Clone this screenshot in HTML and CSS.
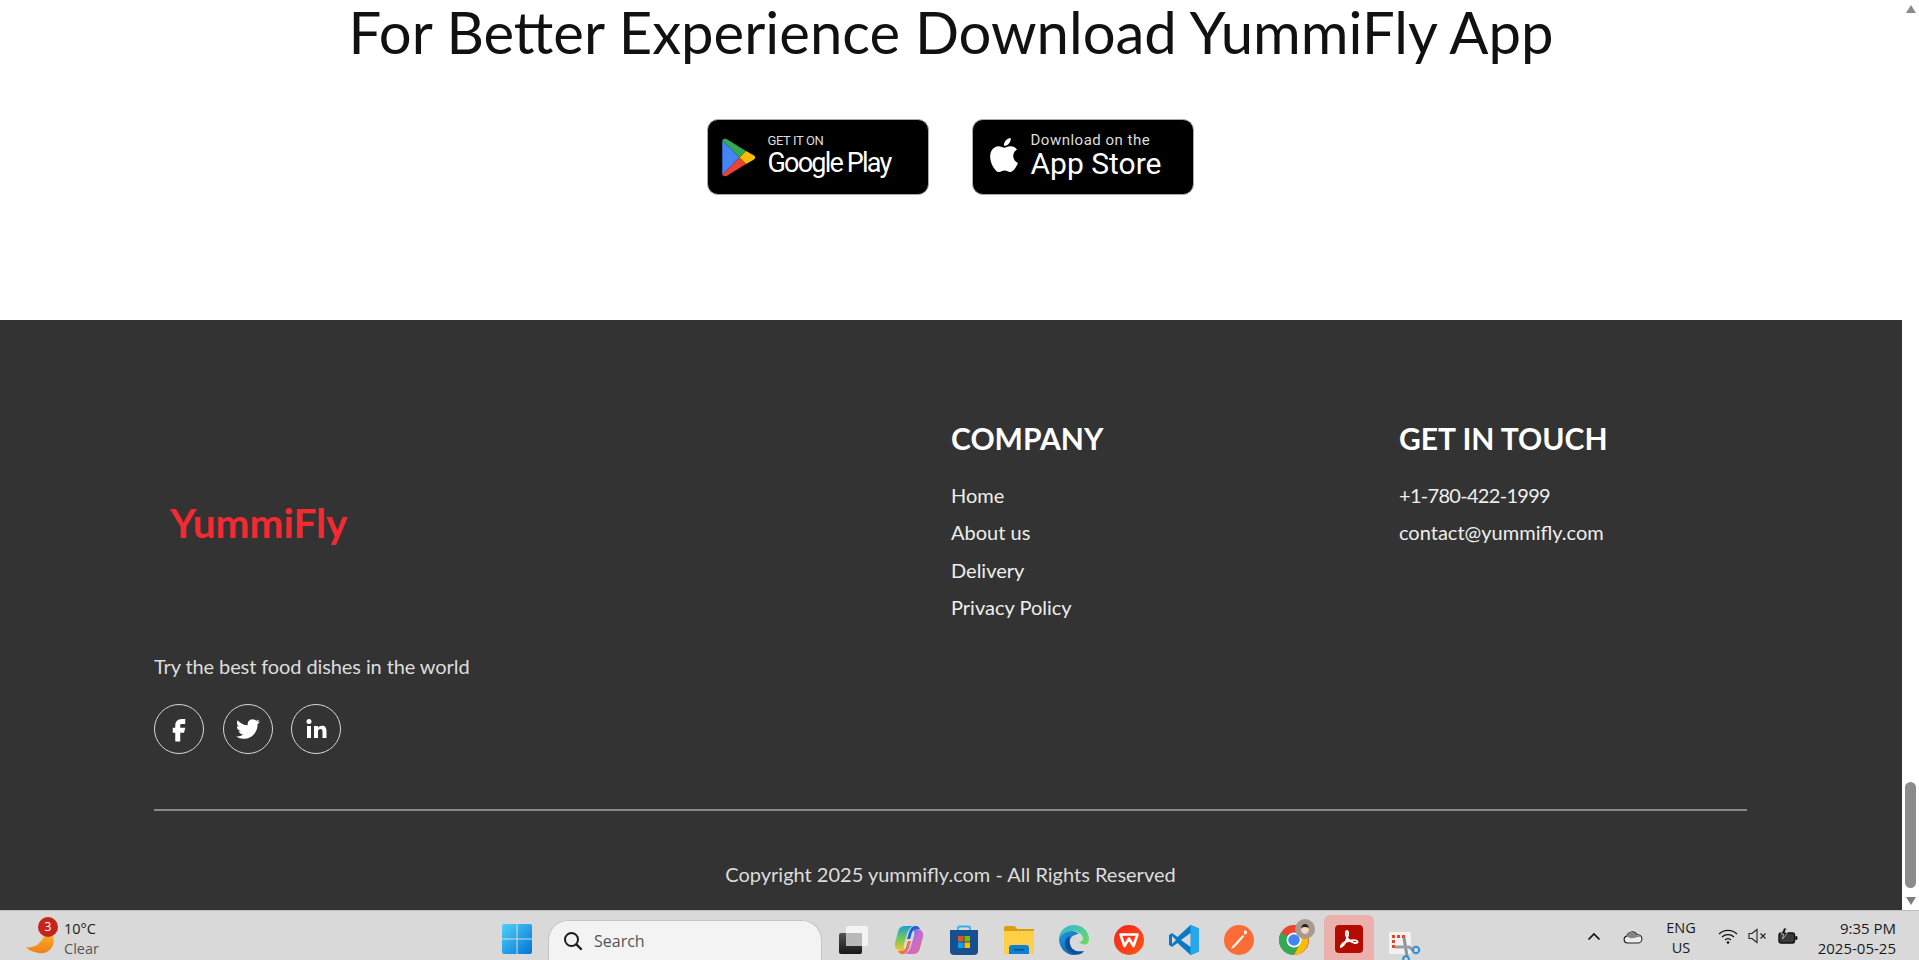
FILE: index.html
```html
<!DOCTYPE html>
<html lang="en">
<head>
<meta charset="utf-8">
<title>YummiFly</title>
<link rel="stylesheet" href="styles.css">
</head>
<body>
<div class="screen">
  <div class="view">
    <main class="page">
      <section class="download">
        <h1 class="download-title">For Better Experience Download YummiFly App</h1>
        <div class="stores">
          <a class="store">
            <svg class="store-icon gp" viewBox="0 0 32 36"><path d="M1 2 17 18 1 34Z" fill="#4285f4"/><path d="M1 2C2 .5 4 .5 5 1L23 12 17 18Z" fill="#34a853"/><path d="M1 34C2 35.500 4 35.500 5 35L23 24 17 18Z" fill="#ea4335"/><path d="M23 12 30 16C32 17 32 19 30 20L23 24 17 18Z" fill="#fbbc04"/></svg>
            <span class="store-text"><small class="gp-small">GET IT ON</small><b class="gp-big">Google Play</b></span>
          </a>
          <a class="store">
            <svg class="store-icon ap" viewBox="0 0 24 24"><path fill="#fff" d="M12.152 6.896c-.948 0-2.415-1.078-3.960-1.040-2.040.027-3.910 1.183-4.961 3.014-2.117 3.675-.546 9.103 1.519 12.090 1.013 1.454 2.208 3.090 3.792 3.039 1.520-.065 2.090-.987 3.935-.987 1.831 0 2.350.987 3.960.948 1.637-.026 2.676-1.480 3.676-2.948 1.156-1.688 1.636-3.325 1.662-3.415-.039-.013-3.182-1.221-3.220-4.857-.026-3.040 2.480-4.494 2.597-4.559-1.429-2.090-3.623-2.324-4.390-2.376-2-.156-3.675 1.090-4.610 1.090zM15.530 3.830c.843-1.012 1.400-2.427 1.245-3.830-1.207.052-2.662.805-3.532 1.818-.780.896-1.454 2.338-1.273 3.714 1.338.104 2.715-.688 3.559-1.701"/></svg>
            <span class="store-text"><small class="ap-small">Download on the</small><b class="ap-big">App Store</b></span>
          </a>
        </div>
      </section>
      <footer class="footer">
        <div class="footer-grid">
          <div class="brand">
            <div class="logo">YummiFly</div>
            <p class="tagline">Try the best food dishes in the world</p>
            <div class="socials">
              <a class="social social-fb"><svg viewBox="0 0 24 24"><path fill="#fff" d="M14 8h3V4h-3c-2.800 0-5 2.200-5 5v2H7v4h2v7h4v-7h3l1-4h-4V9c0-.6.4-1 1-1z"/></svg></a>
              <a class="social"><svg viewBox="0 0 24 24"><path fill="#fff" d="M23.953 4.570a10 10 0 01-2.825.775 4.958 4.958 0 002.163-2.723c-.951.555-2.005.959-3.127 1.184a4.920 4.920 0 00-8.384 4.482C7.690 8.095 4.067 6.130 1.640 3.162a4.822 4.822 0 00-.666 2.475c0 1.710.870 3.213 2.188 4.096a4.904 4.904 0 01-2.228-.616v.060a4.923 4.923 0 003.946 4.827 4.996 4.996 0 01-2.212.085 4.936 4.936 0 004.604 3.417 9.867 9.867 0 01-6.102 2.105c-.390 0-.779-.023-1.170-.067a13.995 13.995 0 007.557 2.209c9.053 0 13.998-7.496 13.998-13.985 0-.210 0-.420-.015-.630A9.935 9.935 0 0024 4.590z"/></svg></a>
              <a class="social"><svg viewBox="0 0 24 24"><g fill="#fff"><circle cx="5" cy="4.500" r="2.500"/><rect x="3" y="9" width="4" height="12"/><path d="M10 9h4v1.800C14.800 9.500 16.200 8.700 18 8.700c3.200 0 4.500 2 4.500 5.300v7h-4v-6.300c0-1.700-.6-2.700-2.100-2.700-1.500 0-2.400 1-2.400 2.700V21h-4z"/></g></svg></a>
            </div>
          </div>
          <nav class="col">
            <h2 class="col-title">COMPANY</h2>
            <a class="col-link">Home</a>
            <a class="col-link">About us</a>
            <a class="col-link">Delivery</a>
            <a class="col-link">Privacy Policy</a>
          </nav>
          <div class="col">
            <h2 class="col-title">GET IN TOUCH</h2>
            <a class="col-link col-phone">+1-780-422-1999</a>
            <a class="col-link">contact@yummifly.com</a>
          </div>
        </div>
        <hr class="rule">
        <p class="copyright">Copyright 2025 yummifly.com - All Rights Reserved</p>
      </footer>
    </main>
    <aside class="scrollbar">
      <span class="arrow arrow-up"></span>
      <span class="thumb"></span>
      <span class="arrow arrow-down"></span>
    </aside>
  </div>
  <div class="taskbar">
    <div class="weather">
      <span class="weather-icon">
        <svg viewBox="0 0 30 24"><defs><linearGradient id="moon" x1="0" y1="0" x2="0" y2="1"><stop offset="0" stop-color="#fbb62a"/><stop offset="1" stop-color="#ef7f1a"/></linearGradient></defs><path d="M1 17C9 19 18 13 21 1c7 2 9 8 7 14-2 6-8 9-14 8-6-1-11-3-13-6z" fill="url(#moon)"/></svg>
        <span class="weather-badge">3</span>
      </span>
      <span class="weather-text"><span>10°C</span><span class="weather-sub">Clear</span></span>
    </div>
    <div class="apps">
      <svg class="app-win" viewBox="0 0 30 30"><defs><linearGradient id="win" x1="0" y1="0" x2="1" y2="1"><stop offset="0" stop-color="#4fd0fb"/><stop offset="1" stop-color="#0274d4"/></linearGradient></defs><path fill="url(#win)" d="M0 2a2 2 0 0 1 2-2h12.500v14.500H0ZM15.500 0H28a2 2 0 0 1 2 2v12.500H15.500ZM0 15.500h14.500V30H2a2 2 0 0 1-2-2ZM15.500 15.500H30V28a2 2 0 0 1-2 2H15.500Z"/></svg>
      <div class="search">
        <svg class="search-icon" viewBox="0 0 20 20"><circle cx="8.500" cy="8.500" r="6.500" fill="none" stroke="#1c1c1c" stroke-width="2"/><path d="M13.500 13.500 18 18" stroke="#1c1c1c" stroke-width="2.400" stroke-linecap="round"/></svg>
        <span>Search</span>
      </div>
      <svg class="app" viewBox="0 0 30 30"><defs><linearGradient id="tv1" x1="0" y1="0" x2="0" y2="1"><stop offset="0" stop-color="#555"/><stop offset="1" stop-color="#161616"/></linearGradient></defs><rect x="0" y="8" width="23" height="21" rx="2" fill="url(#tv1)"/><rect x="7" y="1" width="22" height="20" rx="2" fill="#fafafa" fill-opacity=".78"/><rect x="7" y="8" width="16" height="13" fill="#b9b9b9"/></svg>
      <svg class="app" viewBox="0 0 30 30"><defs><linearGradient id="cp1" x1="0" y1="0" x2="0" y2="1"><stop offset="0" stop-color="#19a0dc"/><stop offset=".55" stop-color="#7ec94c"/><stop offset="1" stop-color="#f6c338"/></linearGradient><linearGradient id="cp2" x1="0" y1="0" x2="1" y2="1"><stop offset="0" stop-color="#3a78ea"/><stop offset=".5" stop-color="#c36bd6"/><stop offset="1" stop-color="#ee6a80"/></linearGradient></defs><path d="M11 1C7 1 5 3 4 7L1 18c-1 5 2 8 6 8h5c-2-1-3-3-2-7l3-10c1-4 3-6 6-8z" fill="url(#cp1)"/><path d="M19 29c4 0 6-2 7-6l3-11c1-5-2-8-6-8h-5c2 1 3 3 2 7l-3 10c-1 4-3 6-6 8z" fill="url(#cp2)"/><path d="M11 1h11c2 0 3 1 4 3h-3c-4 0-5 3-6 7l-1 3h-3l2-7c1-3 3-5 5-6z" fill="#1b62d6"/><path d="M19 29H8c-2 0-3-1-4-3h3c4 0 5-3 6-7l1-3h3l-2 7c-1 3-3 5-5 6z" fill="#f5714c"/></svg>
      <svg class="app" viewBox="0 0 30 30"><path d="M9 6V3a1.500 1.500 0 0 1 1.500-1.500h9A1.500 1.500 0 0 1 21 3v3" fill="none" stroke="#29b6f0" stroke-width="1.800"/><path d="M1 5h28v21a4 4 0 0 1-4 4H5a4 4 0 0 1-4-4z" fill="#17508f"/><rect x="9" y="11" width="5.500" height="5.500" fill="#e8501f"/><rect x="15.500" y="11" width="5.500" height="5.500" fill="#7fba00"/><rect x="9" y="17.500" width="5.500" height="5.500" fill="#02a4ef"/><rect x="15.500" y="17.500" width="5.500" height="5.500" fill="#ffb900"/></svg>
      <svg class="app" viewBox="0 0 30 28"><path d="M0 2a2 2 0 0 1 2-2h7c2 0 3 1 4 3h17v4H0z" fill="#d99e0b"/><path d="M0 5h30v23H0z" fill="#ffcf48"/><path d="M5 28v-6a3 3 0 0 1 3-3h14a3 3 0 0 1 3 3v6z" fill="#0f7fd4"/><rect x="10" y="23" width="10" height="1.500" fill="#0a4f8a"/></svg>
      <svg class="app" viewBox="0 0 30 30"><defs><linearGradient id="ed1" x1="0" y1="0" x2="1" y2="1"><stop offset="0" stop-color="#2fb8d8"/><stop offset="1" stop-color="#6fdc5a"/></linearGradient><linearGradient id="ed2" x1="0" y1="0" x2="1" y2="1"><stop offset="0" stop-color="#1b9de2"/><stop offset="1" stop-color="#0c4f9e"/></linearGradient></defs><path d="M15 0C7 0 0 6 0 14c3-6 8-8 13-8 6 0 11 3 11 8 0 2-2 3-4 3 2 2 5 3 8 2 1-1 2-3 2-5C30 6 23 0 15 0z" fill="url(#ed1)"/><path d="M0 14c0 9 7 16 15 16 4 0 8-1 10-4-7 2-13-1-14-7-1-4 1-8 5-9 1-1 2-1 4-1-2-2-5-3-7-3C7 6 2 9 0 14z" fill="url(#ed2)"/><path d="M11 19c1 6 7 9 14 7-2 2-5 3-8 3-6 0-11-5-11-11 0-3 2-6 5-7-1 3-1 5 0 8z" fill="#0d4f96"/></svg>
      <svg class="app" viewBox="0 0 30 30"><defs><linearGradient id="wps" x1="0" y1="0" x2="1" y2="1"><stop offset="0" stop-color="#f5211e"/><stop offset="1" stop-color="#fb5a12"/></linearGradient></defs><circle cx="15" cy="15" r="15" fill="url(#wps)"/><path d="M6.500 9.500H23.500L19.500 21 15 13.500 10.500 21Z" fill="none" stroke="#fff" stroke-width="2.600" stroke-linejoin="round"/></svg>
      <svg class="app" viewBox="0 0 30 30"><path d="M21.500 0 30 3.500v23L21.500 30 8.500 18l-5.500 4L0 20v-10l3-2 5.500 4z" fill="#0a78c2"/><path d="M21.500 0 30 3.500v23L21.500 30z" fill="#25a7ec"/><path d="M21.500 8v14L12 15z" fill="#d9d9d9"/><path d="M3 11v8l4-4z" fill="#d9d9d9"/></svg>
      <svg class="app" viewBox="0 0 30 30"><circle cx="15" cy="15" r="15" fill="#fb6c37"/><path d="M20 6c1.500-1 3 0 3 1.500S21 10 20 9zM19 10l-5 5-6 7 1 1.500 5-5 6-7z" fill="#fff"/><path d="M7 24l2-4 2 2z" fill="#ffe0d3"/></svg>
      <span class="chrome">
        <svg class="app-chrome" viewBox="0 0 30 30"><circle cx="15" cy="15" r="15" fill="#ea4335"/><path d="M15 15 2 7.500A15 15 0 0 0 15 30l7.500-13z" fill="#34a853"/><path d="M15 10h13.600A15 15 0 0 1 15 30l7-13z" fill="#fbbc04"/><circle cx="15" cy="15" r="7.500" fill="#fff"/><circle cx="15" cy="15" r="5.800" fill="#4285f4"/></svg>
        <span class="avatar"><span class="avatar-head"></span></span>
      </span>
      <span class="active-app">
        <svg class="app-pdf" viewBox="0 0 28 28"><rect width="28" height="28" rx="4" fill="#b30b00"/><path d="M6 22c3-1 6-7 7-12 .3-2 0-4-1-4s-1.500 2-1 4c1 4 5 7 8.500 8 2.500.5 3.500-.5 3-1.500S19 15 15.500 15.500C12 16 7.500 18 6 21c-.5 1 0 1.500 0 1z" fill="none" stroke="#fff" stroke-width="1.800"/></svg>
      </span>
      <svg class="app-snip" viewBox="0 0 32 30"><rect width="22" height="22" rx="2" fill="#f4f2f0"/><path d="M3 3h3v3H3zM8 3h3v3H8zM13 3h3v3h-3zM3 8h3v3H3zM3 13h3v3H3z" fill="#e2452c"/><path d="M15 6 18 24" stroke="#8e9299" stroke-width="3"/><path d="M6 15H20L25 19" fill="none" stroke="#9a9ea5" stroke-width="3"/><circle cx="27" cy="18" r="3.200" fill="none" stroke="#2f8fd8" stroke-width="2"/><circle cx="17" cy="27" r="2.800" fill="none" stroke="#2f8fd8" stroke-width="2"/></svg>
    </div>
    <div class="tray">
      <svg class="tray-chevron" viewBox="0 0 14 9"><path d="M1.500 7.500 7 2l5.500 5.500" fill="none" stroke="#111" stroke-width="1.700"/></svg>
      <svg class="tray-cloud" viewBox="0 0 20 15"><path d="M4.500 14a3.500 3.500 0 0 1-.7-6.900A5.500 5.500 0 0 1 14 5.800a4.100 4.100 0 0 1 1.500 8.200z" fill="#ececec" stroke="#222" stroke-width="1.100"/><path d="M4 7.500A5 5 0 0 1 13.700 6.300c1.500 0 3 .8 3.500 2-4-1-6 1.500-9 1-1.500-.3-3-1.300-4.200-1.800z" fill="#858585"/></svg>
      <span class="lang"><span>ENG</span><span>US</span></span>
      <span class="status">
        <svg class="tray-icon" viewBox="0 0 20 16"><g fill="none" stroke="#111" stroke-width="1.200"><path d="M1 6a13 13 0 0 1 18 0"/><path d="M4 9a9 9 0 0 1 12 0"/><path d="M7 12a4.500 4.500 0 0 1 6 0"/></g><circle cx="10" cy="14.500" r="1.300" fill="#111"/></svg>
        <svg class="tray-icon" viewBox="0 0 20 16"><path d="M1 5.500h3L9 1.500v13l-5-4H1z" fill="none" stroke="#222" stroke-width="1.100"/><path d="M12.500 5.500l5 5m0-5-5 5" stroke="#222" stroke-width="1.100"/></svg>
        <svg class="tray-batt" viewBox="0 0 20 16"><rect x="1" y="5" width="15.500" height="10" rx="2" fill="#3a3a3a" stroke="#111" stroke-width="1.400"/><rect x="17.200" y="8" width="2.200" height="4" rx="1" fill="#111"/><path d="M6 0 3 6h3L4.500 11 9.500 4.500H7L8.500 0z" fill="#111" stroke="#d9d9d9" stroke-width=".7"/></svg>
      </span>
      <span class="clock"><span>9:35 PM</span><span>2025-05-25</span></span>
    </div>
  </div>
</div>
</body>
</html>
```

FILE: styles.css
```css
* { box-sizing: border-box; }
html, body { margin: 0; height: 100%; overflow: hidden; }
body { font-family: "Lato", "Liberation Sans", sans-serif; background: #fff; }

.screen { height: 960px; display: flex; flex-direction: column; }
.view { height: 910px; display: flex; }
.page { flex: 1; display: flex; flex-direction: column; min-width: 0; }

.download { height: 320px; display: flex; flex-direction: column; align-items: center; }
.download-title { margin: 0; font-size: 58px; line-height: 64px; font-weight: 400; color: #111; }
.stores { display: flex; gap: 43px; margin: 55px 2px 0 0; }
.store { width: 222px; height: 76px; border-radius: 11px; background: #000; border: 1px solid #aaa; display: flex; align-items: center; color: #fff; }
.store-icon { flex: none; }
.gp { width: 35px; height: 39px; margin-left: 13px; margin-right: 12px; }
.ap { width: 34px; height: 40px; margin-left: 14px; margin-right: 10px; margin-top: -4px; }
.store-text { display: flex; flex-direction: column; font-family: "Roboto", sans-serif; }
.store-text small, .store-text b { font-weight: 400; display: block; white-space: nowrap; }
.gp-small { font-size: 13px; line-height: 15px; letter-spacing: -.4px; color: #ddd; margin-top: -3px; }
.gp-big { font-size: 27px; line-height: 30px; letter-spacing: -1.800px; }
.ap-small { font-size: 15px; line-height: 16px; letter-spacing: .5px; color: #ddd; margin-top: -2px; }
.ap-big { font-size: 30px; line-height: 32px; }

.footer { flex: 1; background: #333; color: #eee; padding: 100px 155px 0 154px; display: flex; flex-direction: column; }
.footer-grid { display: grid; grid-template-columns: 797px 448px 1fr; height: 389px; }
.brand { display: flex; flex-direction: column; }
.logo { font-size: 40.500px; line-height: 50px; font-weight: 700; color: #f32a31; margin: 78px 0 0 16px; }
.tagline { margin: 106px 0 0; font-size: 20px; line-height: 24px; letter-spacing: -.1px; color: #ddd; }
.socials { display: flex; gap: 18.500px; margin-top: 26px; }
.social { width: 50px; height: 50px; border: 1.5px solid #d8d8d8; border-radius: 50%; display: flex; align-items: center; justify-content: center; }
.social svg { width: 24px; height: 24px; }
.social-fb svg { width: 30px; height: 30px; }
.col { display: flex; flex-direction: column; align-items: flex-start; }
.col-title { margin: 0 0 21px; font-size: 30px; line-height: 36px; font-weight: 700; color: #fff; }
.col-link { font-size: 20px; line-height: 37.3px; color: #eee; }
.col-phone { letter-spacing: -.7px; }
.rule { margin: 0; border: 0; border-top: 2px solid #8a8a8a; }
.copyright { margin: 50px 0 0; text-align: center; font-size: 20px; line-height: 26px; color: #ddd; }

.scrollbar { width: 17px; background: #fff; display: flex; flex-direction: column; align-items: center; }
.arrow { width: 0; height: 0; border-left: 5.5px solid transparent; border-right: 5.5px solid transparent; }
.arrow-up { border-bottom: 8px solid #8a8a8a; margin-top: 5px; }
.arrow-down { border-top: 8px solid #7d7d7d; margin: 9px 0 5px; }
.thumb { width: 11px; height: 106px; border-radius: 6px; background: #8c8c8c; margin-top: auto; }

.taskbar { height: 50px; background: #d9d9d9; border-top: 1px solid #bdbdbd; display: flex; color: #1a1a1a; font-family: "Open Sans", "Noto Sans", sans-serif; overflow: hidden; }
.weather { width: 502px; display: flex; padding-left: 25px; flex: none; }
.weather-icon { display: block; position: relative; width: 30px; height: 49px; }
.weather-icon svg { position: absolute; left: 0; top: 19px; width: 30px; height: 24px; }
.weather-badge { position: absolute; left: 13px; top: 6px; width: 20px; height: 20px; border-radius: 50%; background: #c4241c; color: #fff; font-size: 12px; line-height: 20px; text-align: center; }
.weather-text { display: flex; flex-direction: column; margin-left: 9px; font-size: 14.500px; line-height: 20px; padding-top: 8px; }
.weather-sub { color: #555; }

.apps { display: flex; align-items: flex-start; height: 49px; flex: none; }
.app { flex: none; width: 30px; height: 30px; margin: 14px 25px 0 0; }
.app-win { flex: none; width: 30px; height: 30px; margin: 13px 16px 0 0; }
.search { width: 274px; height: 40px; margin: 9px 17px 0 0; border-radius: 20px 20px 0 0; background: #f3f3f3; border: 1px solid #c6c6c6; border-bottom: 0; display: flex; align-items: center; padding-left: 14px; font-size: 16px; color: #555; }
.search-icon { width: 20px; height: 20px; margin-right: 11px; }
.chrome { position: relative; display: block; flex: none; width: 30px; height: 30px; margin: 14px 15px 0 0; }
.app-chrome { display: block; width: 30px; height: 30px; }
.avatar { position: absolute; left: 16px; top: -6px; width: 20px; height: 20px; border-radius: 50%; background: #a89a8e; display: flex; justify-content: center; align-items: center; }
.avatar-head { width: 8px; height: 10px; border-radius: 50%; background: #efd8c6; border-top: 3px solid #222; }
.active-app { width: 50px; height: 45px; margin: 4px 15px 0 0; padding-top: 10px; background: #ecb0ad; border-radius: 6px 6px 0 0; display: flex; align-items: flex-start; justify-content: center; flex: none; }
.app-pdf { width: 28px; height: 28px; }
.app-snip { flex: none; width: 32px; height: 30px; margin-top: 21px; }

.tray { flex: 1; display: flex; align-items: center; height: 49px; padding-top: 5px; }
.tray-chevron { width: 14px; height: 9px; margin-left: 166px; margin-top: -4px; }
.tray-cloud { width: 20px; height: 15px; margin-left: 22px; margin-top: -4px; }
.lang { display: flex; flex-direction: column; align-items: center; margin-left: 22px; width: 32px; font-size: 14.500px; line-height: 20px; }
.status { display: flex; align-items: center; gap: 10px; margin-left: 21px; margin-top: -5px; }
.tray-icon, .tray-batt { width: 20px; height: 16px; display: block; }
.clock { display: flex; flex-direction: column; align-items: flex-end; margin-left: auto; margin-right: 23px; font-size: 15px; line-height: 20px; }
```
